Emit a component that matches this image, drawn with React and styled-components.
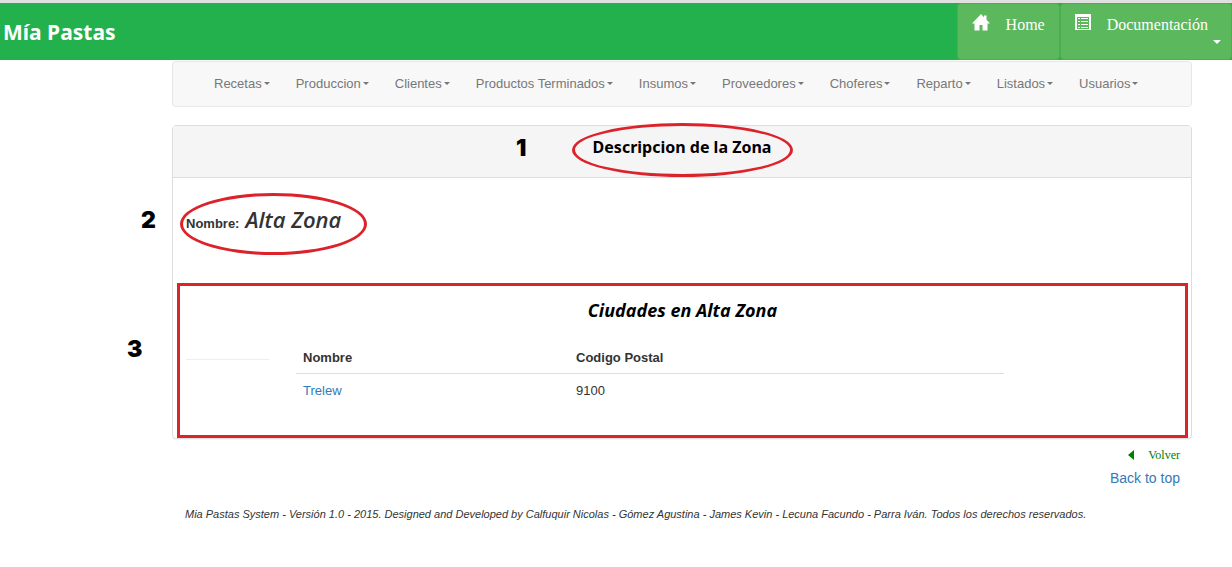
import React from "react";
import styled, { createGlobalStyle } from "styled-components";

const RED = "#dc222b";

const GlobalStyle = createGlobalStyle`
  * { box-sizing: border-box; }
  body {
    margin: 0;
    background: #fff;
    color: #333;
    font: 13px/17px "Liberation Sans", Arial, sans-serif;
  }
  a { color: #337ab7; text-decoration: none; }
  button { font: inherit; cursor: pointer; }
`;

const TopBar = styled.header`
  display: flex;
  justify-content: space-between;
  height: 60px;
  border-top: 3px solid #e0e0e0;
  background: #22b14c;
  overflow: hidden;
`;

const Brand = styled.a`
  padding: 14px 3px;
  color: #fff;
  font: bold 21px/30px "Noto Sans", Tahoma, sans-serif;
`;

const TopActions = styled.div`
  display: flex;
`;

const TopButton = styled.button`
  display: flex;
  flex-direction: column;
  align-items: flex-end;
  padding: 9px ${(p) => (p.$menu ? 10 : 14)}px 0 14px;
  border: 1px solid #4cae4c;
  border-radius: 4px;
  background: #5cb85c;
  color: #fff;
  font-family: "Liberation Serif", "Times New Roman", serif;
  font-size: 16px;
  line-height: 24px;
`;

const TopLabel = styled.span`
  display: flex;
  gap: 16px;
  padding-right: ${(p) => (p.$menu ? 13 : 0)}px;
  svg { display: block; margin-top: 1px; }
`;

const Caret = styled.span`
  display: inline-block;
  border-top: ${(p) => p.$size}px solid currentColor;
  border-left: ${(p) => p.$size}px solid transparent;
  border-right: ${(p) => p.$size}px solid transparent;
`;

const TopCaret = styled(Caret)`
  margin-top: 3px;
`;

const Page = styled.div`
  padding: 1px 40px 24px 172px;
`;

const MainNav = styled.nav`
  margin-bottom: 18px;
  border: 1px solid #e7e7e7;
  border-radius: 4px;
  background: #f8f8f8;
`;

const NavList = styled.ul`
  display: flex;
  margin: 0;
  padding: 0 28px;
  list-style: none;
`;

const NavButton = styled.button`
  display: flex;
  align-items: center;
  gap: 2px;
  padding: 13px 13px 14px;
  border: 0;
  background: none;
  color: #777;
  line-height: 17px;
  white-space: nowrap;
`;

const Panel = styled.main`
  border: 1px solid #ddd;
  border-radius: 4px;
  box-shadow: 0 1px 1px rgba(0, 0, 0, 0.05);
`;

const PanelHeading = styled.div`
  position: relative;
  display: flex;
  justify-content: center;
  height: 52px;
  padding-top: 9px;
  border-bottom: 1px solid #ddd;
  background: #f5f5f5;
`;

const PanelTitle = styled.h1`
  position: relative;
  margin: 0;
  height: 24px;
  color: #000;
  font: bold 16px/24px "Noto Sans", Tahoma, sans-serif;
`;

const Ring = styled.span`
  position: absolute;
  top: ${(p) => p.$top}px;
  left: ${(p) => p.$left}px;
  right: ${(p) => p.$right}px;
  height: ${(p) => p.$height}px;
  border: 3px solid ${RED};
  border-radius: 50%;
  pointer-events: none;
`;

const Mark = styled.span`
  position: absolute;
  top: ${(p) => p.$top}px;
  left: ${(p) => p.$left}px;
  color: #000;
  font: 900 23px/28px Inter, "Arial Black", sans-serif;
`;

const ZoneRow = styled.div`
  position: relative;
  height: 105px;
  padding: 26px 13px 0;
`;

const ZoneName = styled.p`
  position: relative;
  display: inline-flex;
  align-items: baseline;
  gap: 6px;
  margin: 0;
  line-height: 30px;
`;

const ZoneValue = styled.span`
  font: italic 600 22px/30px "Open Sans", sans-serif;
`;

const Cities = styled.section`
  position: relative;
  margin: 0 3px 0 4px;
  padding: 12px 181px 28px 6px;
  border: 3px solid ${RED};
`;

const CitiesTitle = styled.h2`
  margin: 0 -181px 19px -6px;
  color: #000;
  font: italic bold 18px/24px "Open Sans", sans-serif;
  text-align: center;
`;

const CitiesBody = styled.div`
  display: grid;
  grid-template-columns: 83px 1fr;
  gap: 27px;
`;

const Divider = styled.hr`
  width: 100%;
  height: 1px;
  margin: 18px 0 0;
  border: 0;
  background: #eee;
`;

const Table = styled.table`
  width: 100%;
  border-collapse: collapse;
  table-layout: fixed;
  th, td { padding: 8px 7px; text-align: left; }
  th { padding-bottom: 7px; border-bottom: 1px solid #ddd; }
  th:first-child { width: 273px; }
`;

const PageLinks = styled.div`
  display: flex;
  flex-direction: column;
  align-items: flex-end;
  gap: 5px;
  padding: 7px 12px 0;
`;

const BackLink = styled.a`
  display: flex;
  align-items: center;
  gap: 14px;
  color: #008000;
  font: 12px/18px "Liberation Serif", "Times New Roman", serif;
`;

const TopLink = styled.a`
  font-size: 14px;
  line-height: 18px;
`;

const Footer = styled.footer`
  padding: 19px 13px 0;
  font-size: 11px;
  line-height: 17px;
  font-style: italic;
`;

const HomeIcon = () => (
  <svg width="18" height="17" viewBox="0 0 18 17" fill="#fff" aria-hidden="true">
    <path d="M9 0 0 9.500h2.500V16.500h5v-5.500h3v5.500h5V9.500H18L14.500 5.700V1.500h-2.500v1.700z" />
  </svg>
);

const ListIcon = () => (
  <svg width="16" height="17" viewBox="0 0 16 17" fill="#fff" aria-hidden="true">
    <path fillRule="evenodd" d="M0 0h16v16H0zM2 3v12h12V3z" />
    <path d="M3 4h2v1H3zM6 4h7v1H6zM3 7h2v1H3zM6 7h7v1H6zM3 10h2v1H3zM6 10h7v1H6zM3 13h2v1H3zM6 13h7v1H6z" />
  </svg>
);

const ArrowIcon = () => (
  <svg width="6" height="11" viewBox="0 0 6 11" fill="#008000" aria-hidden="true">
    <path d="M6 0v10L0 5z" />
  </svg>
);

const MENUS = [
  "Recetas",
  "Produccion",
  "Clientes",
  "Productos Terminados",
  "Insumos",
  "Proveedores",
  "Choferes",
  "Reparto",
  "Listados",
  "Usuarios",
];

const CITIES = [{ name: "Trelew", code: "9100" }];

export default function App() {
  return (
    <>
      <GlobalStyle />
      <TopBar id="top">
        <Brand href="#">Mía Pastas</Brand>
        <TopActions>
          <TopButton type="button">
            <TopLabel><HomeIcon />Home</TopLabel>
          </TopButton>
          <TopButton type="button" $menu>
            <TopLabel $menu><ListIcon />Documentación</TopLabel>
            <TopCaret $size={4} />
          </TopButton>
        </TopActions>
      </TopBar>
      <Page>
        <MainNav>
          <NavList>
            {MENUS.map((name) => (
              <li key={name}>
                <NavButton type="button">{name}<Caret $size={3} /></NavButton>
              </li>
            ))}
          </NavList>
        </MainNav>
        <Panel>
          <PanelHeading>
            <Mark $top={8} $left={343}>1</Mark>
            <PanelTitle>
              Descripcion de la Zona
              <Ring $top={-12} $left={-21} $right={-22} $height={54} />
            </PanelTitle>
          </PanelHeading>
          <ZoneRow>
            <Mark $top={28} $left={-32}>2</Mark>
            <ZoneName>
              <strong>Nombre:</strong>
              <ZoneValue>Alta Zona</ZoneValue>
              <Ring $top={-11} $left={-6} $right={-26} $height={62} />
            </ZoneName>
          </ZoneRow>
          <Cities>
            <Mark $top={49} $left={-53}>3</Mark>
            <CitiesTitle>Ciudades en Alta Zona</CitiesTitle>
            <CitiesBody>
              <Divider />
              <Table>
                <thead>
                  <tr><th scope="col">Nombre</th><th scope="col">Codigo Postal</th></tr>
                </thead>
                <tbody>
                  {CITIES.map((city) => (
                    <tr key={city.name}>
                      <td><a href="#trelew">{city.name}</a></td>
                      <td>{city.code}</td>
                    </tr>
                  ))}
                </tbody>
              </Table>
            </CitiesBody>
          </Cities>
        </Panel>
        <PageLinks>
          <BackLink href="#volver"><ArrowIcon />Volver</BackLink>
          <TopLink href="#top">Back to top</TopLink>
        </PageLinks>
        <Footer>
          Mia Pastas System - Versión 1.0 - 2015. Designed and Developed by Calfuquir Nicolas - Gómez Agustina - James Kevin - Lecuna Facundo - Parra Iván. Todos los derechos reservados.
        </Footer>
      </Page>
    </>
  );
}
